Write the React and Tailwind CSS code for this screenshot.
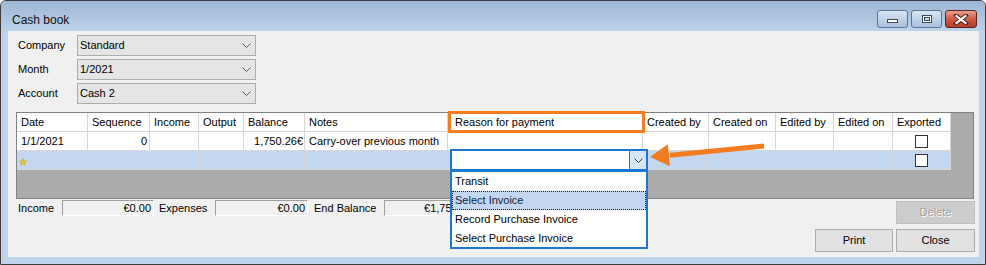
import React from "react";

const cols = [
  { name: "Date", w: "w-[71px]" },
  { name: "Sequence", w: "w-[62px]" },
  { name: "Income", w: "w-[49px]" },
  { name: "Output", w: "w-[45px]" },
  { name: "Balance", w: "w-[61px]" },
  { name: "Notes", w: "w-[143px]" },
  { name: "Reason for payment", w: "w-[195px]", pad: "pl-[7px]" },
  { name: "Created by", w: "w-[66px]" },
  { name: "Created on", w: "w-[67px]" },
  { name: "Edited by", w: "w-[58px]" },
  { name: "Edited on", w: "w-[59px]" },
  { name: "Exported", w: "w-[58px]" },
];

const Chevron = ({ color = "#606060" }) => (
  <svg width="9" height="5" viewBox="0 0 9 5" className="shrink-0">
    <path d="M0.5 0.5 L4.5 4.5 L8.5 0.5" fill="none" stroke={color} strokeWidth="1" />
  </svg>
);

const Combo = ({ label, value }) => (
  <div className="flex items-center">
    <div className="w-[59px]">{label}</div>
    <div className="w-[179px] h-[21px] border border-[#adadad] bg-[#e5e5e5] flex items-center justify-between pl-[2px] pr-[4px]">
      <span>{value}</span>
      <Chevron />
    </div>
  </div>
);

const Checkbox = () => (
  <div className="w-[13px] h-[13px] border border-[#333333] bg-white" />
);

const Cell = ({ w, children, align = "left", pad }) => (
  <div
    className={`${w} h-full shrink-0 border-r border-[#d6d6d6] flex items-center whitespace-nowrap overflow-hidden ${
      align === "right" ? "justify-end pr-[1px]" : align === "center" ? "justify-center" : pad || "pl-[4px]"
    }`}
  >
    {children}
  </div>
);

const ValueBox = ({ w, value }) => (
  <div className={`${w} h-[16px] border-t border-l border-[#a0a0a0] border-b border-r border-b-white border-r-white flex items-center justify-end pr-[2px] whitespace-nowrap overflow-hidden`}>
    {value}
  </div>
);

const Button = ({ label, w, disabled }) => (
  <div
    className={`${w} h-[23px] flex items-center justify-center border ${
      disabled
        ? "bg-[#cccccc] border-[#bfbfbf] text-[#a3a3a3] [text-shadow:1px_1px_0_#ffffff]"
        : "bg-[#e1e1e1] border-[#adadad]"
    }`}
  >
    {label}
  </div>
);

export default function App() {
  return (
    <div className="w-[986px] h-[265px] relative overflow-hidden bg-white font-['Liberation_Sans',Arial,sans-serif] text-[11px] leading-[13px] text-black">
      <div className="w-full h-full flex flex-col border border-[#3c3c3c] rounded-t-[6px] overflow-hidden bg-[#bfd4eb]">
        {/* title bar */}
        <div className="h-[30px] shrink-0 flex justify-between bg-linear-to-b from-[#9db6d5] to-[#bdd3ea] pl-[11px] pr-[8px]">
          <div className="pt-[12px] text-[12px] leading-[14px] text-[#111]">Cash book</div>
          <div className="flex gap-[3px] pt-[9px]">
            <div className="w-[31px] h-[18px] rounded-[3px] border border-[#5b7391] bg-linear-to-b from-[#d9e5f2] to-[#a8c1dd] flex items-end justify-center pb-[4px]">
              <div className="w-[11px] h-[4px] border border-[#3b4a5c] bg-white" />
            </div>
            <div className="w-[31px] h-[18px] rounded-[3px] border border-[#5b7391] bg-linear-to-b from-[#d9e5f2] to-[#a8c1dd] flex items-center justify-center">
              <div className="w-[10px] h-[8px] border border-[#3b4a5c] bg-white p-[1px]">
                <div className="w-full h-full border border-[#3b4a5c] bg-[#c8d8ea]" />
              </div>
            </div>
            <div className="w-[32px] h-[18px] rounded-[3px] border border-[#5a2320] bg-linear-to-b from-[#e6a090] via-[#cf5a42] to-[#b93a28] flex items-center justify-center">
              <svg width="16" height="11" viewBox="0 0 16 11">
                <path d="M3 1.5 L13 9.5 M13 1.5 L3 9.5" stroke="#4a2320" strokeWidth="4" strokeLinecap="square" />
                <path d="M3.5 2 L12.5 9 M12.5 2 L3.5 9" stroke="#ffffff" strokeWidth="2.2" strokeLinecap="square" />
              </svg>
            </div>
          </div>
        </div>

        {/* frame + client */}
        <div className="flex-1 flex pl-[7px] pr-[6px] pb-[7px]">
          <div className="flex-1 bg-[#f0f0f0] flex flex-col">
            <div className="flex flex-col gap-[3px] pt-[4px] pl-[10px]">
              <Combo label="Company" value="Standard" />
              <Combo label="Month" value="1/2021" />
              <Combo label="Account" value="Cash 2" />
            </div>

            {/* grid */}
            <div className="ml-[8px] mt-[8px] w-[958px] h-[87px] border border-[#828282] bg-[#ababab] flex flex-col">
              <div className="h-[19px] w-fit flex bg-white border-b border-[#d6d6d6]">
                {cols.map((c) => (
                  <Cell key={c.name} w={c.w} pad={c.pad}>{c.name}</Cell>
                ))}
              </div>
              <div className="h-[19px] w-fit flex bg-white border-b border-[#d6d6d6]">
                <Cell w="w-[71px]">1/1/2021</Cell>
                <Cell w="w-[62px]" align="right"><span className="pr-[1px]">0</span></Cell>
                <Cell w="w-[49px]" />
                <Cell w="w-[45px]" />
                <Cell w="w-[61px]" align="right">1,750.26€</Cell>
                <Cell w="w-[143px]">Carry-over previous month</Cell>
                <Cell w="w-[195px]" />
                <Cell w="w-[66px]" />
                <Cell w="w-[67px]" />
                <Cell w="w-[58px]" />
                <Cell w="w-[59px]" />
                <Cell w="w-[58px]" align="center"><Checkbox /></Cell>
              </div>
              <div className="h-[19px] w-fit flex bg-[#c3d7f1] border-b border-[#d6d6d6]">
                <Cell w="w-[71px]">
                  <svg width="8" height="8" viewBox="0 0 10 10" className="ml-[-2px] mt-[3px]">
                    <path d="M5 0.5 L6.3 3.6 L9.6 3.8 L7 5.9 L7.9 9.3 L5 7.4 L2.1 9.3 L3 5.9 L0.4 3.8 L3.7 3.6 Z" fill="#f2c230" stroke="#c99a10" strokeWidth="0.6" />
                  </svg>
                </Cell>
                <Cell w="w-[62px]" />
                <Cell w="w-[49px]" />
                <Cell w="w-[45px]" />
                <Cell w="w-[61px]" />
                <Cell w="w-[143px]" />
                <Cell w="w-[195px]" />
                <Cell w="w-[66px]" />
                <Cell w="w-[67px]" />
                <Cell w="w-[58px]" />
                <Cell w="w-[59px]" />
                <Cell w="w-[58px]" align="center"><Checkbox /></Cell>
              </div>
            </div>

            {/* totals + delete */}
            <div className="mt-[1px] flex justify-between items-start pr-[4px]">
              <div className="flex items-center pl-[10px]">
                <div className="w-[44px]">Income</div>
                <ValueBox w="w-[92px]" value="€0.00" />
                <div className="w-[61px] pl-[5px]">Expenses</div>
                <ValueBox w="w-[93px]" value="€0.00" />
                <div className="w-[76px] pl-[6px]">End Balance</div>
                <ValueBox w="w-[92px]" value="€1,750.26" />
              </div>
              <div className="mt-[1px]">
                <Button label="Delete" w="w-[79px]" disabled />
              </div>
            </div>
            <div className="mt-[5px] flex justify-end gap-[3px] pr-[4px]">
              <Button label="Print" w="w-[78px]" />
              <Button label="Close" w="w-[79px]" />
            </div>
          </div>
        </div>
      </div>

      {/* highlight around header */}
      <div className="absolute left-[448px] top-[111px] w-[197px] h-[22px] border-[3px] border-[#f47d1f]" />

      {/* combo editor */}
      <div className="absolute left-[450px] top-[149px] w-[198px] h-[22px] border-2 border-[#1a78cf] bg-white flex justify-end">
        <div className="w-[17px] h-full bg-[#d4e7f8] border-l border-[#1a78cf] flex items-center justify-center">
          <Chevron color="#3a3a3a" />
        </div>
      </div>

      {/* dropdown list */}
      <div className="absolute left-[450px] top-[171px] w-[198px] border-2 border-t border-[#1a78cf] bg-white flex flex-col">
        <div className="h-[19px] flex items-center pl-[3px]">Transit</div>
        <div className="h-[19px] flex items-center pl-[2px] bg-[#c3d7f1] border border-dotted border-[#222] text-[#0c2440]">Select Invoice</div>
        <div className="h-[19px] flex items-center pl-[3px]">Record Purchase Invoice</div>
        <div className="h-[18px] flex items-center pl-[3px]">Select Purchase Invoice</div>
      </div>

      {/* arrow */}
      <svg className="absolute left-[640px] top-[135px]" width="135" height="40" viewBox="0 0 135 40">
        <path d="M124 11 L30 20.2" stroke="#f47c20" strokeWidth="5" strokeLinecap="butt" />
        <path d="M10 22 L27.85 9.25 L29.96 31.15 Z" fill="#f47c20" />
      </svg>
    </div>
  );
}
